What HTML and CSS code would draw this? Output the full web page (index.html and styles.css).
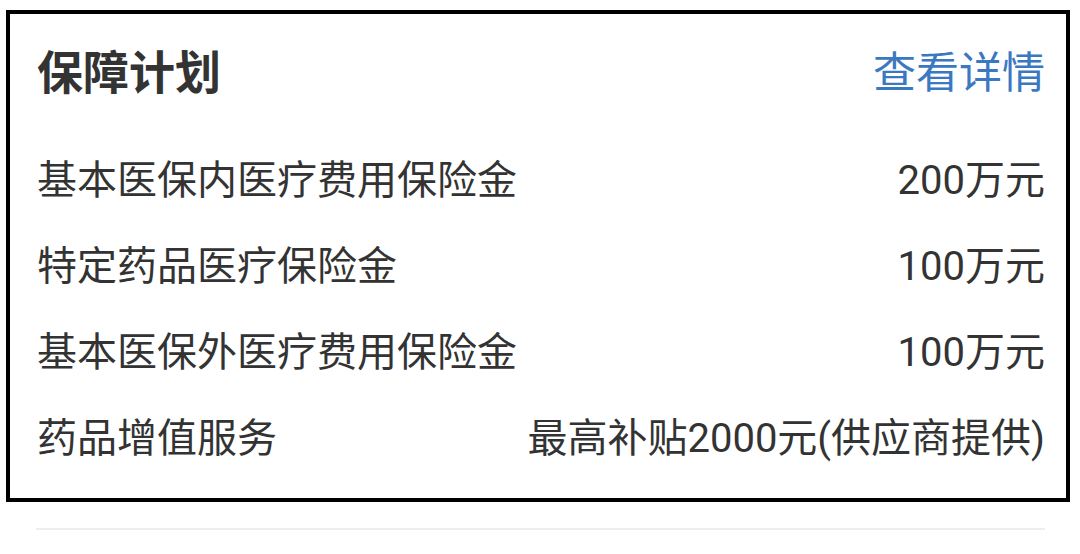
FILE: index.html
```html
<!DOCTYPE html>
<html lang="zh-CN">
<head>
<meta charset="utf-8">
<link rel="stylesheet" href="styles.css">
</head>
<body>
<div class="card">
  <div class="card-head">
    <span class="title">保障计划</span>
    <span class="more">查看详情</span>
  </div>
  <div class="rows">
    <div class="row"><span>基本医保内医疗费用保险金</span><span>200万元</span></div>
    <div class="row"><span>特定药品医疗保险金</span><span>100万元</span></div>
    <div class="row"><span>基本医保外医疗费用保险金</span><span>100万元</span></div>
    <div class="row"><span>药品增值服务</span><span>最高补贴2000元(供应商提供)</span></div>
  </div>
</div>
<div class="divider"></div>
</body>
</html>
```
FILE: styles.css
```css
html, body {
  margin: 0;
  padding: 0;
  background: #fff;
}
body {
  font-family: Roboto, "Noto Sans CJK SC", sans-serif;
  color: #333;
}
.card {
  box-sizing: border-box;
  width: 1064px;
  margin: 10px 0 0 6px;
  border: 4px solid #000;
  padding: 0 21px 20px 27px;
}
.card-head {
  height: 110px;
  display: flex;
  align-items: center;
  justify-content: space-between;
}
.title {
  font-size: 46px;
  font-weight: 700;
  color: #333;
}
.more {
  font-size: 43px;
  color: #3b78c2;
}
.rows {
  padding-top: 10px;
  display: flex;
  flex-direction: column;
}
.row {
  height: 86px;
  display: flex;
  align-items: center;
  justify-content: space-between;
  font-size: 40px;
  color: #333;
}
.divider {
  height: 2px;
  background: #eeeeee;
  margin: 26px 35px 0 36px;
}
```
